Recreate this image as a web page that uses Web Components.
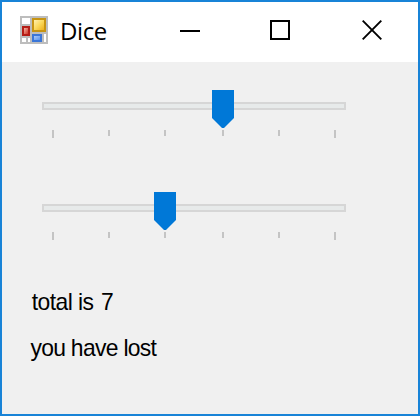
<!DOCTYPE html>
<html lang="en">
<head>
<meta charset="utf-8">
<title>Dice</title>
<style>
html, body { margin: 0; height: 100%; overflow: hidden; }
</style>
</head>
<body>
<dice-window>
  <title-bar slot="title">Dice</title-bar>
  <track-bar value="4"></track-bar>
  <track-bar value="3"></track-bar>
  <result-row style="--lead:4px; --ls:-0.6px"><span>total is</span><span>7</span></result-row>
  <result-row style="--lead:2.5px; --ls:-0.72px"><span>you have lost</span></result-row>
</dice-window>
<script>
function define(name, html, setup) {
  const t = document.createElement('template');
  t.innerHTML = html;
  customElements.define(name, class extends HTMLElement {
    constructor() {
      super();
      this.attachShadow({ mode: 'open' }).append(t.content.cloneNode(true));
    }
    connectedCallback() { if (setup) setup(this); }
  });
}

define('dice-window', `
<style>
:host { display: flex; flex-direction: column; box-sizing: border-box; width: 420px; height: 416px;
  border: 2px solid #1883d7; background: #f0f0f0; color: #000; }
main { display: flex; flex-direction: column; padding: 28px 28px 0; }
</style>
<slot name="title"></slot>
<main><slot></slot></main>`);

define('form-icon', `
<style>:host { display: block; width: 28px; height: 28px; } svg { display: block; }</style>
<svg width="28" height="28" viewBox="0 0 28 28" shape-rendering="crispEdges">
  <defs>
    <linearGradient id="y" x1="0" y1="0" x2="1" y2="1"><stop stop-color="#fff0b0"/><stop offset=".5" stop-color="#fbd95c"/><stop offset="1" stop-color="#edb01d"/></linearGradient>
    <linearGradient id="b" x1="0" y1="0" x2="1" y2="1"><stop stop-color="#a9c9fa"/><stop offset="1" stop-color="#5b93ec"/></linearGradient>
    <linearGradient id="r" x1="0" y1="0" x2="1" y2="1"><stop stop-color="#f4b3a2"/><stop offset="1" stop-color="#cf3427"/></linearGradient>
  </defs>
  <path fill="#bdbdbd" d="M0 0h28v28H0z"/>
  <path fill="#fff" d="M2 2h8v6H2zM2 22h4v4H2zM8 22h2v4H8zM24 18h2v8h-2z"/>
  <path fill="#c79412" d="M12 2h14v14H12z"/><path fill="url(#y)" d="M14 4h10v10H14z"/>
  <path fill="#b51d16" d="M2 10h8v10H2z"/><path fill="url(#r)" d="M4 12h4v6H4z"/>
  <path fill="#3b76d8" d="M12 18h10v8H12z"/><path fill="url(#b)" d="M14 20h6v4h-6z"/>
</svg>`);

define('title-bar', `
<style>
:host { display: flex; height: 60px; background: #fff; font: 24px/32px "Open Sans", "Noto Sans", sans-serif; }
form-icon { margin: 14px 12px 0 18px; }
.name { flex: 1; margin-top: 13px; letter-spacing: -0.4px; }
.buttons { display: flex; padding: 18px 36px 0 0; gap: 70px; }
svg { display: block; }
.buttons svg:last-child { margin-left: 2px; }
</style>
<form-icon></form-icon>
<div class="name"><slot></slot></div>
<div class="buttons">
  <svg width="20" height="20"><path d="M0 10h20v2H0z"/></svg>
  <svg width="20" height="20"><path d="M1 1h18v18H1z" fill="none" stroke="#000" stroke-width="2"/></svg>
  <svg width="20" height="20"><path d="M.7 .7L19.3 19.3M19.3 .7L.7 19.3" fill="none" stroke="#000" stroke-width="1.9"/></svg>
</div>`);

define('track-bar', `
<style>
:host { display: block; height: 102px; padding-left: 12px; }
svg { display: block; }
</style>
<svg width="304" height="50">
  <path d="M1 13h302v6H1z" fill="#e7eaea" stroke="#d6d6d6" stroke-width="2"/>
  <g class="ticks" fill="#c4c4c4"></g>
  <path class="thumb" d="M0 0h22v28L12 38h-2L0 28z" fill="#0078d7"/>
</svg>`, el => {
  const xs = [10, 66, 122, 180, 236, 292];
  el.shadowRoot.querySelector('.ticks').innerHTML = xs.map((x, i) =>
    `<rect x="${x}" y="40" width="2" height="${i % 5 ? 6 : 8}"/>`).join('');
  const x = xs[el.getAttribute('value') - 1] - 10;
  el.shadowRoot.querySelector('.thumb').setAttribute('transform', `translate(${x} 0)`);
});

define('result-row', `
<style>
:host { display: flex; gap: 8px; height: 46px; padding-left: var(--lead); margin: -6px 0 6px -2px;
  box-sizing: border-box; white-space: nowrap; letter-spacing: var(--ls);
  font: 24px/28px "Liberation Sans", Arial, sans-serif;
  transform: scaleX(.953); transform-origin: left; }
</style>
<slot></slot>`);
</script>
</body>
</html>
